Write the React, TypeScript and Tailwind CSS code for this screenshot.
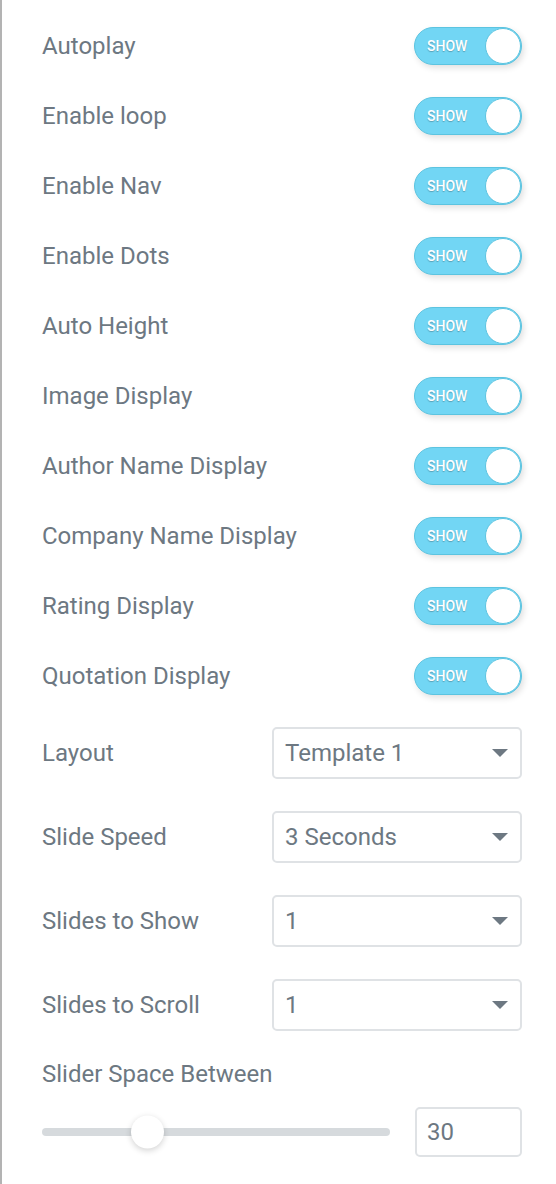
const toggles = [
  "Autoplay",
  "Enable loop",
  "Enable Nav",
  "Enable Dots",
  "Auto Height",
  "Image Display",
  "Author Name Display",
  "Company Name Display",
  "Rating Display",
  "Quotation Display",
];

const selects = [
  { label: "Layout", value: "Template 1" },
  { label: "Slide Speed", value: "3 Seconds" },
  { label: "Slides to Show", value: "1" },
  { label: "Slides to Scroll", value: "1" },
];

function Toggle() {
  return (
    <div className="relative h-[38px] w-[108px] rounded-full border border-[#5cc4e0] bg-[#72d6f4] shadow-[2px_3px_6px_rgba(0,0,0,0.12)]">
      <span className="absolute left-[12px] top-1/2 -translate-y-1/2 text-[14px] font-medium leading-none text-white [text-shadow:0_1px_1px_rgba(0,0,0,0.25)]">
        SHOW
      </span>
      <span className="absolute right-[0px] top-1/2 h-[36px] w-[36px] -translate-y-1/2 rounded-full border border-[#5cc4e0] bg-white" />
    </div>
  );
}

export default function App() {
  return (
    <div
      className="min-h-[1184px] w-[556px] border-l-2 border-[#b3b3b3] bg-white pl-[40px] pr-[34px] pt-[11px] text-[#6d7882]"
      style={{ fontFamily: "Roboto, 'Liberation Sans', sans-serif" }}
    >
      <div className="flex flex-col">
        {toggles.map((label) => (
          <div key={label} className="flex h-[70px] items-center justify-between">
            <span className="text-[24px] leading-none">{label}</span>
            <Toggle />
          </div>
        ))}
      </div>

      <div className="mt-[16px] flex flex-col gap-[32px]">
        {selects.map((s) => (
          <div key={s.label} className="flex h-[52px] items-center justify-between">
            <span className="text-[24px] leading-none">{s.label}</span>
            <div className="flex h-[52px] w-[250px] items-center justify-between rounded-[5px] border-2 border-[#dfe2e5] pl-[11px] pr-[12px]">
              <span className="text-[24px] leading-none">{s.value}</span>
              <svg width="16" height="9" viewBox="0 0 16 9">
                <path d="M0 0 L16 0 L8 8 Z" fill="#6d7882" />
              </svg>
            </div>
          </div>
        ))}
      </div>

      <div className="mt-[30px] text-[24px] leading-[26px]">Slider Space Between</div>

      <div className="mt-[20px] flex h-[50px] items-center justify-between">
        <div className="relative h-[8px] w-[348px] rounded-full bg-[#d6dadd]">
          <span className="absolute left-[89px] top-1/2 h-[33px] w-[33px] -translate-y-1/2 rounded-full bg-white shadow-[0_2px_6px_rgba(0,0,0,0.18)]" />
        </div>
        <div className="flex h-[50px] w-[107px] items-center rounded-[5px] border-2 border-[#dfe2e5] pl-[10px] text-[24px] leading-none">
          30
        </div>
      </div>
    </div>
  );
}
